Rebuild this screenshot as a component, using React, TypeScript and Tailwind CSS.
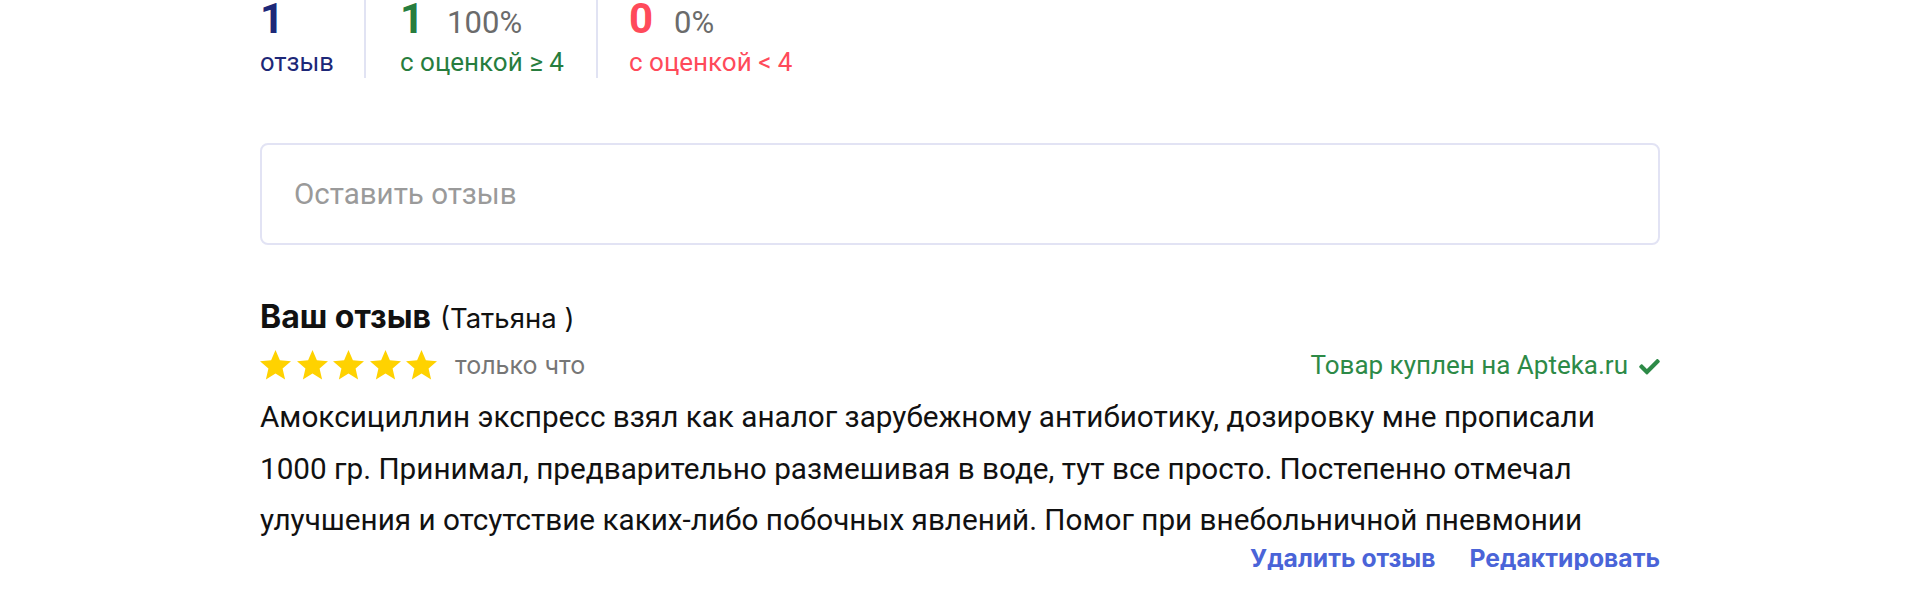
import React from "react";

const Star = () => (
  <svg width="31" height="29.4" viewBox="1.1 0.6 21.8 20.66" className="block">
    <path
      d="M12 0.6l3.09 7.2 7.81.68-5.92 5.14 1.77 7.64L12 17.2l-6.75 4.06 1.77-7.64L1.1 8.48l7.81-.68z"
      fill="#ffd200"
    />
  </svg>
);

export default function App() {
  const body = "font-['Roboto',sans-serif]";
  const geo = "font-['Inter',sans-serif]";
  return (
    <div className="w-full bg-white pr-[3px]">
      <div className="mx-auto w-[1400px]">
        {/* Stats */}
        <div className={`flex ${body}`}>
          <div className="w-[106px] border-r-2 border-[#e1e3f3] h-[78px]">
            <div className="flex items-baseline h-[37px] leading-[37px]">
              <span className="text-[42px] font-bold text-[#1d2878]">1</span>
            </div>
            <div className="mt-[10px] text-[25.5px] leading-[30px] text-[#1d2878]">отзыв</div>
          </div>
          <div className="w-[232px] pl-[34px] border-r-2 border-[#e1e3f3] h-[78px]">
            <div className="flex items-baseline h-[37px] leading-[37px] gap-[23px]">
              <span className="text-[42px] font-bold text-[#277d3e]">1</span>
              <span className="text-[31px] text-[#6b6b6b]">100%</span>
            </div>
            <div className="mt-[10px] text-[26px] leading-[30px] text-[#277d3e]">с оценкой ≥ 4</div>
          </div>
          <div className="pl-[31px] h-[78px]">
            <div className="flex items-baseline h-[37px] leading-[37px] gap-[21px]">
              <span className="text-[42px] font-bold text-[#ff4a5a]">0</span>
              <span className="text-[31px] text-[#6b6b6b]">0%</span>
            </div>
            <div className="mt-[10px] text-[26px] leading-[30px] text-[#ff4a5a]">с оценкой &lt; 4</div>
          </div>
        </div>

        {/* Input */}
        <div className="mt-[65px] h-[102px] rounded-[8px] border-2 border-[#e2e3f4] flex items-center pl-[32px]">
          <span className={`${body} text-[29.5px] text-[#9a9a9a]`}>Оставить отзыв</span>
        </div>

        {/* Review */}
        <div className={`mt-[54px] flex items-baseline gap-[9px] h-[36px] leading-[36px] ${geo}`}>
          <span className="text-[32px] font-bold text-[#111]">Ваш отзыв</span>
          <span className="text-[27.5px] text-[#111]">(Татьяна )</span>
        </div>

        <div className="mt-[15px] flex items-center justify-between h-[30px]">
          <div className="flex items-center">
            <div className="flex gap-[5.5px]">
              <Star />
              <Star />
              <Star />
              <Star />
              <Star />
            </div>
            <span className={`ml-[18px] ${geo} text-[25px] leading-[30px] text-[#767676]`}>только что</span>
          </div>
          <div className="flex items-center gap-[11px]">
            <span className={`${body} text-[26px] leading-[30px] text-[#2d8a47]`}>Товар куплен на Apteka.ru</span>
            <svg width="21" height="17" viewBox="0 0 512 420" className="block mt-[2px]">
              <path
                fill="#2d8a47"
                d="M173.898 400.404l-166.4-166.4c-9.997-9.997-9.997-26.206 0-36.204l36.203-36.204c9.997-9.998 26.207-9.998 36.204 0L192 273.69 432.095 33.596c9.997-9.997 26.207-9.997 36.204 0l36.203 36.204c9.997 9.997 9.997 26.206 0 36.204l-294.4 294.401c-9.998 9.997-26.207 9.997-36.204-.001z"
              />
            </svg>
          </div>
        </div>

        <p className={`mt-[11px] ${body} text-[29.7px] leading-[51.5px] text-[#111]`}>
          Амоксициллин экспресс взял как аналог зарубежному антибиотику, дозировку мне прописали
          <br />
          1000 гр. Принимал, предварительно размешивая в воде, тут все просто. Постепенно отмечал
          <br />
          улучшения и отсутствие каких-либо побочных явлений. Помог при внебольничной пневмонии
        </p>

        <div className={`flex justify-end gap-[34px] ${geo} text-[24.7px] leading-[24px] font-bold text-[#4a64d8]`}>
          <span>Удалить отзыв</span>
          <span>Редактировать</span>
        </div>
      </div>
    </div>
  );
}
